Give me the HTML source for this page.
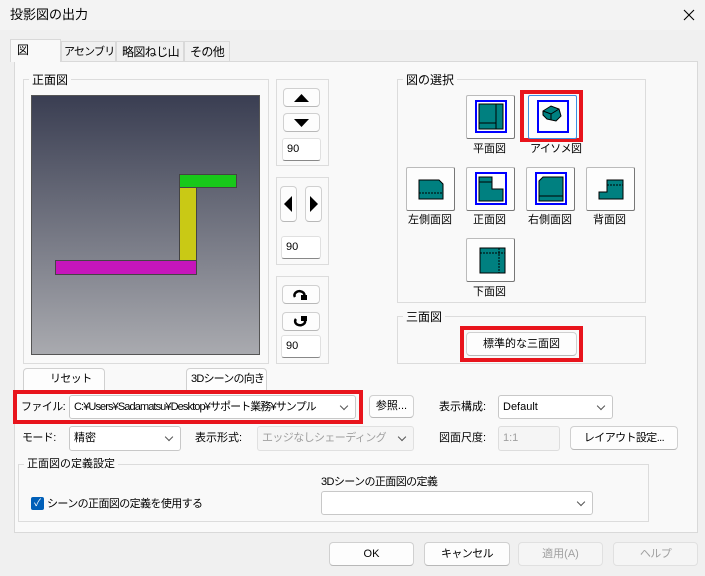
<!DOCTYPE html>
<html><head><meta charset="utf-8"><style>
*{box-sizing:border-box;margin:0;padding:0}
body{width:705px;height:576px;overflow:hidden;background:#f0f0f0;font-family:"Liberation Sans","Noto Sans CJK JP",sans-serif;font-size:11px;color:#000;position:relative}
.a{position:absolute}
.t{position:absolute;white-space:nowrap;line-height:14px}
.grp{position:absolute;border:1px solid #dcdcdc}
.lbl{position:absolute;background:#f9f9f9;padding:0 3px;white-space:nowrap;line-height:14px}
.btn{position:absolute;background:#fdfdfd;border:1px solid #d0d0d0;border-radius:4px;text-align:center;white-space:nowrap;border-bottom-color:#b8b8b8}
.inp{position:absolute;background:#fff;border:1px solid #e0e0e0;border-bottom:1px solid #888;border-radius:3px;padding-left:4px;white-space:nowrap;overflow:hidden}
.cmb{position:absolute;background:#fff;border:1px solid #c8c8c8;border-radius:3px;padding-left:4px;white-space:nowrap;overflow:hidden}
.cmb:after{content:"";position:absolute;right:8px;top:7px;width:5px;height:5px;border-right:1px solid #555;border-bottom:1px solid #555;transform:rotate(45deg)}
.ib{position:absolute;width:49px;height:44px;background:#fdfdfd;border:1px solid #bbb;border-right-color:#777;border-bottom-color:#777;border-radius:2px}
.ib svg{position:absolute;left:5px;top:4px}
.red{position:absolute;border:4px solid #e8141c}
.n{letter-spacing:-0.6px}
</style></head><body>
<div class="a" style="left:0;top:0;width:705px;height:30px;background:#f3f3f3"></div>
<div class="t" style="left:10px;top:8px;font-size:13px">投影図の出力</div>
<svg class="a" style="left:683px;top:9px" width="12" height="12"><path d="M1 1L11 11M11 1L1 11" stroke="#000" stroke-width="1.1"/></svg>

<div class="a" style="left:14px;top:61px;width:684px;height:472px;background:#f9f9f9;border:1px solid #d9d9d9"></div>
<div class="a" style="left:10px;top:39px;width:51px;height:23px;background:#f9f9f9;border:1px solid #d9d9d9;border-bottom:none"></div>
<div class="t" style="left:17px;top:43px;font-size:12px">図</div>
<div class="a" style="left:61px;top:41px;width:55px;height:20px;background:#f0f0f0;border:1px solid #d9d9d9;border-bottom:none"></div>
<div class="t n" style="left:64px;top:45px;font-size:11px;letter-spacing:-0.8px">アセンブリ</div>
<div class="a" style="left:116px;top:41px;width:68px;height:20px;background:#f0f0f0;border:1px solid #d9d9d9;border-bottom:none"></div>
<div class="t n" style="left:122px;top:45px;font-size:12px">略図ねじ山</div>
<div class="a" style="left:184px;top:41px;width:46px;height:20px;background:#f0f0f0;border:1px solid #d9d9d9;border-bottom:none"></div>
<div class="t n" style="left:190px;top:45px;font-size:12px">その他</div>

<div class="grp" style="left:23px;top:79px;width:246px;height:285px"></div>
<div class="lbl" style="left:29px;top:73px;font-size:12px">正面図</div>
<div class="a" style="left:31px;top:95px;width:229px;height:260px;border:1px solid #555;background:linear-gradient(#3a3e52,#a9aaaf)"></div>
<div class="a" style="left:179px;top:174px;width:58px;height:14px;background:#18c81a;border:1px solid #444"></div>
<div class="a" style="left:179px;top:187px;width:18px;height:74px;background:#c9c915;border:1px solid #444"></div>
<div class="a" style="left:55px;top:260px;width:142px;height:15px;background:#c615bb;border:1px solid #444"></div>

<div class="grp" style="left:276px;top:79px;width:53px;height:87px"></div>
<div class="btn" style="left:283px;top:88px;width:37px;height:19px"><svg width="35" height="17"><path d="M10 13L17.5 5 25 13Z"/></svg></div>
<div class="btn" style="left:283px;top:113px;width:37px;height:19px"><svg width="35" height="17"><path d="M10 5L17.5 13 25 5Z"/></svg></div>
<div class="inp" style="left:282px;top:138px;width:39px;height:23px;line-height:21px">90</div>

<div class="grp" style="left:276px;top:177px;width:53px;height:88px"></div>
<div class="btn" style="left:280px;top:186px;width:17px;height:36px"><svg width="15" height="34"><path d="M3 17L11 9V25Z"/></svg></div>
<div class="btn" style="left:305px;top:186px;width:17px;height:36px"><svg width="15" height="34"><path d="M12 17L4 9V25Z"/></svg></div>
<div class="inp" style="left:281px;top:236px;width:40px;height:23px;line-height:21px">90</div>

<div class="grp" style="left:276px;top:276px;width:53px;height:88px"></div>
<div class="btn" style="left:282px;top:285px;width:38px;height:19px"><svg width="36" height="17"><path d="M20 12A5 4 0 1 0 12 11" fill="none" stroke="#000" stroke-width="2.5"/><path d="M18 9h6v5h-6z"/></svg></div>
<div class="btn" style="left:282px;top:312px;width:38px;height:19px"><svg width="36" height="17"><path d="M20 5A5 4 0 1 1 13 6" fill="none" stroke="#000" stroke-width="2.5"/><path d="M18 3h6v5h-6z"/></svg></div>
<div class="inp" style="left:281px;top:335px;width:40px;height:23px;line-height:21px">90</div>

<div class="grp" style="left:397px;top:79px;width:249px;height:224px"></div>
<div class="lbl" style="left:403px;top:73px;font-size:12px">図の選択</div>
<div class="red" style="left:520px;top:90px;width:63px;height:52px"></div>

<div class="ib" style="left:466px;top:95px"><svg width="38" height="34"><rect x="4" y="1" width="30" height="31" fill="none" stroke="#00f" stroke-width="2"/><rect x="7" y="4" width="24" height="25" fill="#008080" stroke="#000"/><path d="M24 4V29M7 23H24" stroke="#000"/></svg></div>
<div class="ib" style="left:528px;top:95px;border-color:#3b8de0"><svg width="38" height="34"><rect x="4" y="1" width="30" height="31" fill="none" stroke="#00f" stroke-width="2"/><path d="M9 11L17 6 25 9 27 16 22 21 13 19 9 15Z" fill="#008080" stroke="#000"/><path d="M9 11L17 14 25 9M17 14V20" stroke="#000" fill="none"/></svg></div>
<div class="t" style="left:473px;top:142px">平面図</div>
<div class="t n" style="left:530px;top:142px">アイソメ図</div>

<div class="ib" style="left:406px;top:167px"><svg width="38" height="34"><path d="M7 8H27L31 12V27H7Z" fill="#008080" stroke="#000"/><path d="M7 21H31" stroke="#000" stroke-dasharray="2 1"/></svg></div>
<div class="ib" style="left:466px;top:167px"><svg width="38" height="34"><rect x="4" y="1" width="30" height="31" fill="none" stroke="#00f" stroke-width="2"/><path d="M7 5H20V17H31V29H7Z" fill="#008080" stroke="#000"/><path d="M7 10H20" stroke="#000"/></svg></div>
<div class="ib" style="left:526px;top:167px"><svg width="38" height="34"><rect x="4" y="1" width="30" height="31" fill="none" stroke="#00f" stroke-width="2"/><path d="M11 5H31V29H7V9Z" fill="#008080" stroke="#000"/><path d="M7 24H31" stroke="#000"/></svg></div>
<div class="ib" style="left:586px;top:167px"><svg width="38" height="34"><path d="M15 8H31V27H7V20H15Z" fill="#008080" stroke="#000"/><path d="M15 13H31" stroke="#000" stroke-dasharray="2 1"/></svg></div>
<div class="t" style="left:408px;top:213px">左側面図</div>
<div class="t" style="left:473px;top:213px">正面図</div>
<div class="t" style="left:528px;top:213px">右側面図</div>
<div class="t" style="left:593px;top:213px">背面図</div>

<div class="ib" style="left:466px;top:238px"><svg width="38" height="34"><rect x="8" y="5" width="25" height="25" fill="#008080" stroke="#000"/><path d="M8 10H33M27 5V30" stroke="#000" stroke-dasharray="2 1"/></svg></div>
<div class="t" style="left:473px;top:285px">下面図</div>

<div class="grp" style="left:397px;top:316px;width:249px;height:48px"></div>
<div class="lbl" style="left:403px;top:310px;font-size:12px">三面図</div>
<div class="red" style="left:460px;top:326px;width:123px;height:36px"></div>
<div class="btn" style="left:466px;top:332px;width:111px;height:24px;line-height:22px">標準的な三面図</div>

<div class="a" style="left:23px;top:368px;width:82px;height:24px;background:#fdfdfd;border:1px solid #d0d0d0;border-bottom:none;border-radius:4px 4px 0 0"></div>
<div class="t n" style="left:50px;top:372px">リセット</div>
<div class="a" style="left:186px;top:368px;width:81px;height:24px;background:#fdfdfd;border:1px solid #d0d0d0;border-bottom:none;border-radius:4px 4px 0 0"></div>
<div class="t n" style="left:191px;top:372px;letter-spacing:-0.8px">3Dシーンの向き</div>

<div class="red" style="left:13px;top:390px;width:350px;height:34px"></div>
<div class="t n" style="left:21px;top:400px">ファイル:</div>
<div class="cmb n" style="left:69px;top:395px;width:287px;height:24px;line-height:22px;padding-right:20px;letter-spacing:-0.9px;font-size:11px">C:¥Users¥Sadamatsu¥Desktop¥サポート業務¥サンプル</div>
<div class="btn" style="left:369px;top:395px;width:45px;height:23px;line-height:21px">参照...</div>
<div class="t" style="left:439px;top:400px">表示構成:</div>
<div class="cmb" style="left:498px;top:395px;width:115px;height:24px;line-height:22px">Default</div>

<div class="t n" style="left:22px;top:431px">モード:</div>
<div class="cmb" style="left:69px;top:426px;width:112px;height:25px;line-height:23px">精密</div>
<div class="t" style="left:195px;top:431px">表示形式:</div>
<div class="cmb n" style="left:257px;top:426px;width:157px;height:25px;line-height:23px;color:#a0a0a0;background:#f5f5f5;border-color:#e0e0e0">エッジなしシェーディング</div>
<div class="t" style="left:439px;top:431px">図面尺度:</div>
<div class="a" style="left:498px;top:426px;width:62px;height:25px;line-height:23px;border:1px solid #ddd;border-radius:3px;color:#a0a0a0;padding-left:4px;background:#f5f5f5">1:1</div>
<div class="btn n" style="left:570px;top:426px;width:108px;height:24px;line-height:22px">レイアウト設定...</div>

<div class="grp" style="left:18px;top:464px;width:631px;height:58px"></div>
<div class="lbl" style="left:24px;top:457px">正面図の定義設定</div>
<div class="a" style="left:31px;top:497px;width:13px;height:13px;background:#005fb8;border-radius:2px;color:#fff;font-size:10px;line-height:13px;text-align:center">✓</div>
<div class="t n" style="left:47px;top:497px">シーンの正面図の定義を使用する</div>
<div class="t n" style="left:321px;top:475px">3Dシーンの正面図の定義</div>
<div class="cmb" style="left:321px;top:491px;width:272px;height:24px"></div>

<div class="btn" style="left:329px;top:542px;width:85px;height:24px;line-height:22px">OK</div>
<div class="btn n" style="left:424px;top:542px;width:86px;height:24px;line-height:22px">キャンセル</div>
<div class="btn" style="left:518px;top:542px;width:85px;height:24px;line-height:22px;color:#a0a0a0;background:#f5f5f5;border-color:#e0e0e0">適用(A)</div>
<div class="btn n" style="left:613px;top:542px;width:85px;height:24px;line-height:22px;color:#a0a0a0;background:#f5f5f5;border-color:#e0e0e0">ヘルプ</div>
</body></html>
